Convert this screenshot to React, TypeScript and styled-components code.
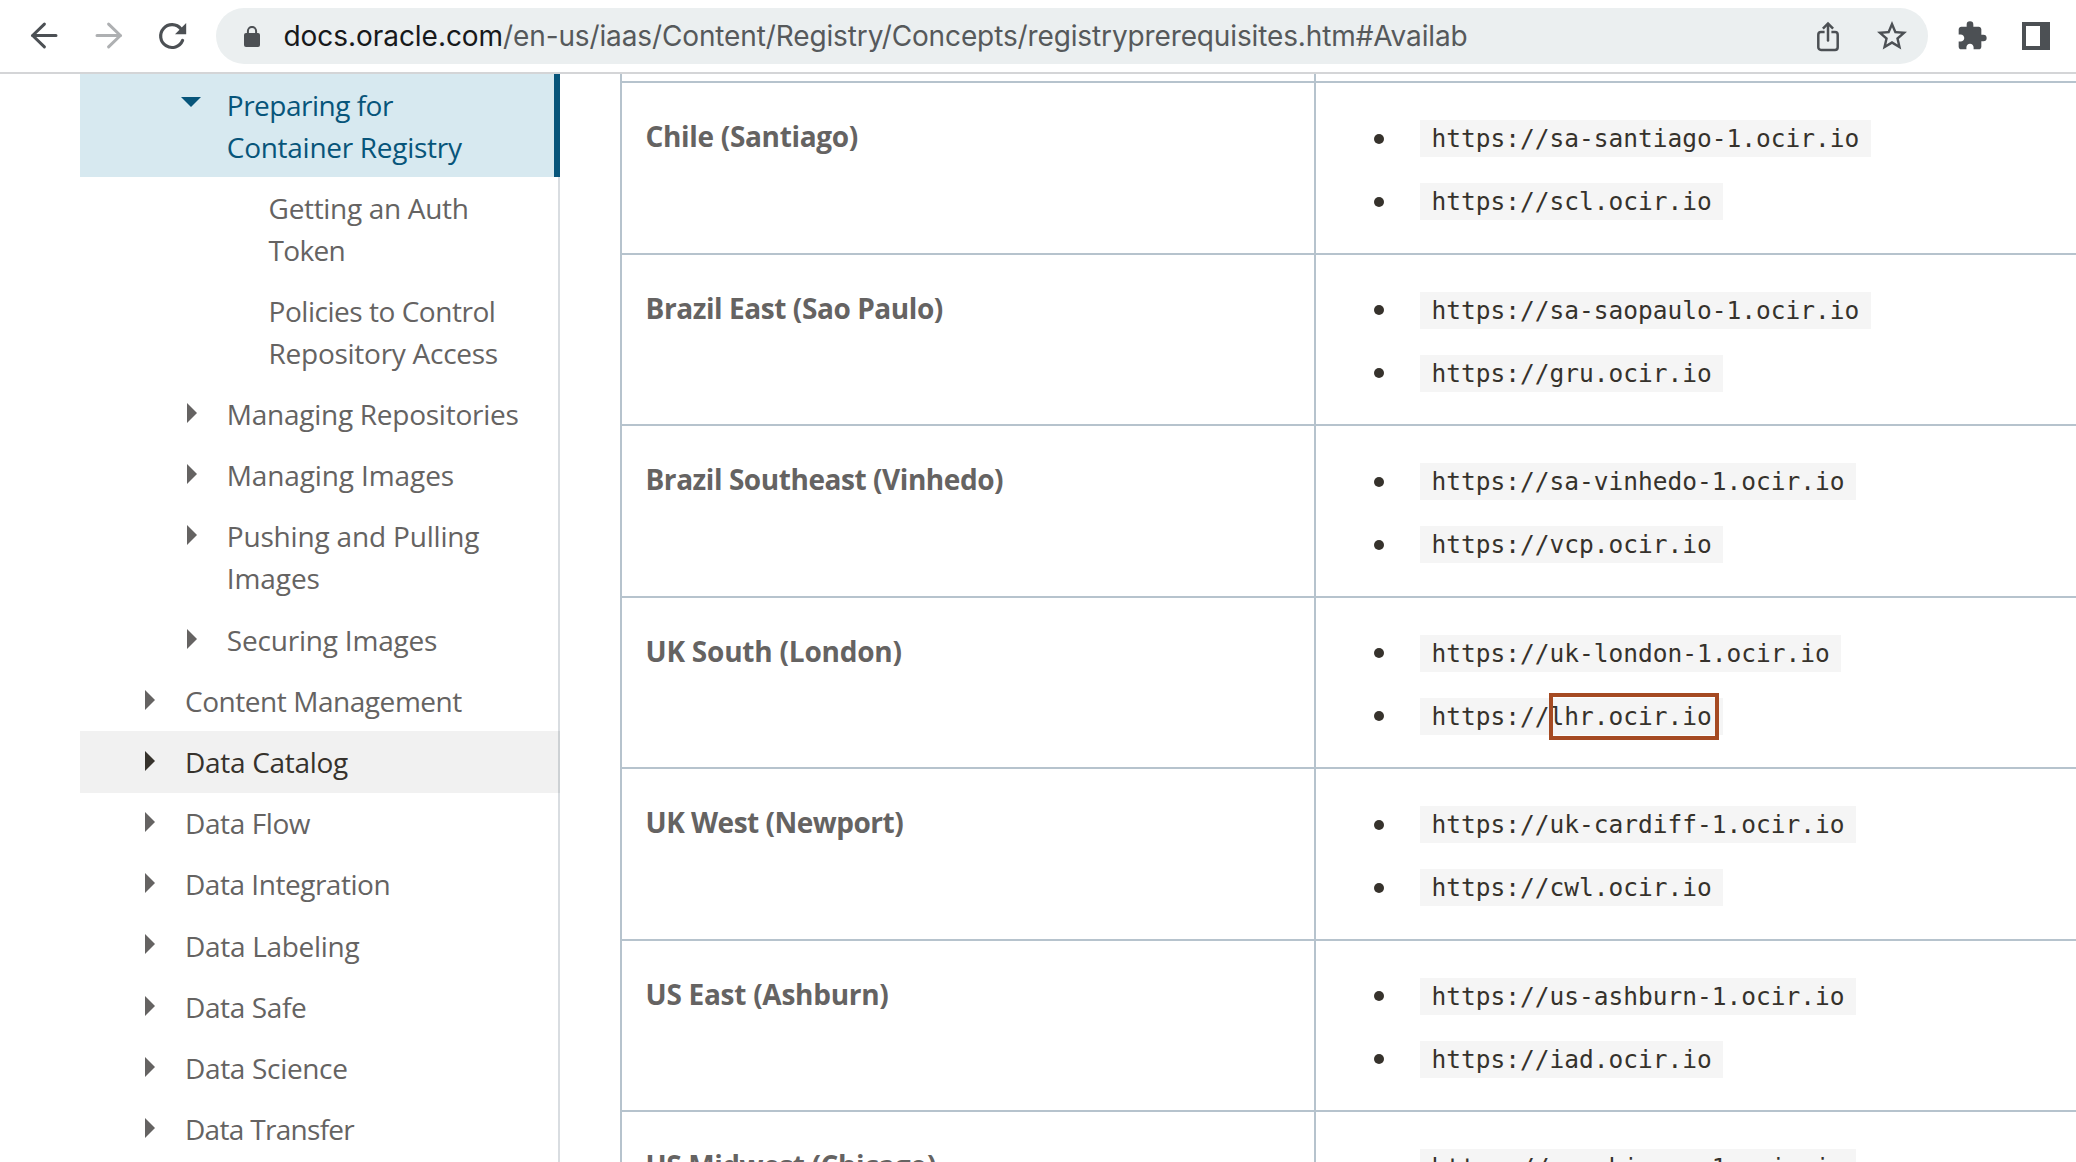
import React from "react";
import styled, { createGlobalStyle, css } from "styled-components";
import { MdStarBorder, MdExtension } from "react-icons/md";

const GlobalStyle = createGlobalStyle`
  * { box-sizing: border-box; }
  html, body { margin: 0; padding: 0; background: #fff; overflow: hidden; }
`;

const sans = `"Open Sans", "Noto Sans", sans-serif`;
const mono = `"DejaVu Sans Mono", "Liberation Mono", monospace`;
const rule = "#b6c3cd";

const Page = styled.div`
  display: flex;
  flex-direction: column;
  width: 2076px;
  height: 1162px;
  overflow: hidden;
  background: #fff;
  font-family: ${sans};
`;

const Toolbar = styled.header`
  flex: none;
  display: flex;
  align-items: flex-start;
  height: 74px;
  padding: 8px 26px 0 28px;
  border-bottom: 2px solid #d4d5d7;
  color: #4c5054;
`;

const NavButtons = styled.div`
  display: flex;
  gap: 32px;
  padding: 12px 28px 0 0;
  svg { display: block; }
`;

const AddressBar = styled.div`
  flex: 1;
  display: flex;
  align-items: flex-start;
  height: 56px;
  padding: 0 18px 0 28px;
  border-radius: 28px;
  background: #ebeff0;
`;

const Lock = styled.svg`
  display: block;
  margin: 18px 23.5px 0 0;
`;

const Address = styled.div`
  flex: 1;
  height: 56px;
  line-height: 56px;
  font-family: Inter, Roboto, sans-serif;
  font-size: 28px;
  letter-spacing: -0.125px;
  white-space: nowrap;
  color: #56595b;
`;

const Host = styled.span`
  color: #17191b;
  letter-spacing: -0.05px;
`;

const AddressActions = styled.div`
  display: flex;
  gap: 30px;
  padding-top: 10px;
  svg { display: block; }
`;

const Extras = styled.div`
  display: flex;
  gap: 34px;
  padding: 12px 0 0 28px;
  svg { display: block; }
`;

const PanelIcon = styled.span`
  width: 28px;
  height: 28px;
  margin-top: 2px;
  border: 4px solid #4c5054;
  border-right-width: 10px;
`;

const Body = styled.div`
  flex: 1;
  display: flex;
  min-height: 0;
  overflow: hidden;
`;

const Sidebar = styled.nav`
  flex: none;
  width: 480px;
  margin: -0.2px 0 0 80px;
  border-right: 2px solid #d9dde1;
`;

type Tone = "normal" | "current" | "hover";

const tones = {
  normal: css`color: #656362;`,
  current: css`
    color: #07557a;
    background: #d7e9f0;
    box-shadow: inset -6px 0 0 #07557a;
  `,
  hover: css`
    color: #36322c;
    background: rgba(22, 21, 19, 0.06);
  `,
};

const Item = styled.a<{ $level: number; $tone: Tone }>`
  display: flex;
  margin-right: -2px;
  padding: 9.7px 0 9.5px ${(p) => 59 + (p.$level - 1) * 41.8}px;
  font-size: 28px;
  line-height: 42px;
  white-space: nowrap;
  ${(p) => tones[p.$tone]}
`;

const ArrowSlot = styled.span<{ $open?: boolean }>`
  flex: none;
  width: 46px;
  padding: ${(p) => (p.$open ? "13.5px 0 0 0" : "9.9px 0 0 6px")};
  svg { display: block; }
`;

const Line = styled.span<{ $track: number }>`
  display: block;
  letter-spacing: ${(p) => p.$track}px;
`;

const Table = styled.div`
  flex: 1;
  margin-left: 60px;
  border-left: 2px solid ${rule};
`;

const HeaderTail = styled.div`
  display: grid;
  grid-template-columns: 694px 1fr;
  height: 7.4px;
`;

const Row = styled.div`
  display: grid;
  grid-template-columns: 694px 1fr;
  height: 171.5px;
  border-top: 2px solid ${rule};
`;

const NameCell = styled.div<{ $track?: number }>`
  padding: 31.7px 0 0 23.5px;
  border-right: 2px solid ${rule};
  color: #656362;
  font-size: 28px;
  font-weight: 700;
  line-height: 42px;
  letter-spacing: ${(p) => p.$track ?? 0}px;
`;

const HeaderEdge = styled.div`
  border-right: 2px solid ${rule};
`;

const UrlList = styled.ul`
  display: flex;
  flex-direction: column;
  gap: 26px;
  margin: 0;
  padding: 36.9px 0 0 58px;
  list-style: none;
`;

const UrlItem = styled.li`
  display: flex;
  align-items: center;
  gap: 36px;
  height: 37px;
  &::before {
    content: "";
    width: 10px;
    height: 10px;
    border-radius: 50%;
    background: #36322c;
  }
`;

const Code = styled.code`
  height: 37px;
  padding: 0 11.7px 0 11.5px;
  background: #f5f5f5;
  color: #36322c;
  font-family: ${mono};
  font-size: 24.5px;
  line-height: 37px;
  white-space: nowrap;
`;

const Marked = styled.span`
  position: relative;
  display: inline-block;
  &::after {
    content: "";
    position: absolute;
    inset: -5px -7.5px -5px -0.5px;
    border: 4px solid #a54a22;
  }
`;

interface Entry {
  level: number;
  tone?: Tone;
  arrow?: "open" | "closed";
  lines: [string, number][];
}

const entries: Entry[] = [
  { level: 2, tone: "current", arrow: "open", lines: [["Preparing for", -0.5], ["Container Registry", -0.28]] },
  { level: 3, lines: [["Getting an Auth", -0.32], ["Token", -0.7]] },
  { level: 3, lines: [["Policies to Control", -0.47], ["Repository Access", -0.27]] },
  { level: 2, arrow: "closed", lines: [["Managing Repositories", -0.26]] },
  { level: 2, arrow: "closed", lines: [["Managing Images", -0.12]] },
  { level: 2, arrow: "closed", lines: [["Pushing and Pulling", -0.18], ["Images", -0.1]] },
  { level: 2, arrow: "closed", lines: [["Securing Images", -0.2]] },
  { level: 1, arrow: "closed", lines: [["Content Management", -0.45]] },
  { level: 1, tone: "hover", arrow: "closed", lines: [["Data Catalog", -0.3]] },
  { level: 1, arrow: "closed", lines: [["Data Flow", -0.4]] },
  { level: 1, arrow: "closed", lines: [["Data Integration", -0.47]] },
  { level: 1, arrow: "closed", lines: [["Data Labeling", -0.3]] },
  { level: 1, arrow: "closed", lines: [["Data Safe", -0.38]] },
  { level: 1, arrow: "closed", lines: [["Data Science", -0.33]] },
  { level: 1, arrow: "closed", lines: [["Data Transfer", -0.7]] },
];

interface Region {
  name: string;
  track: number;
  hosts: [string, string];
  marked?: boolean;
}

const regions: Region[] = [
  { name: "Chile (Santiago)", track: -0.32, hosts: ["sa-santiago-1.ocir.io", "scl.ocir.io"] },
  { name: "Brazil East (Sao Paulo)", track: -0.42, hosts: ["sa-saopaulo-1.ocir.io", "gru.ocir.io"] },
  { name: "Brazil Southeast (Vinhedo)", track: -0.44, hosts: ["sa-vinhedo-1.ocir.io", "vcp.ocir.io"] },
  { name: "UK South (London)", track: -0.22, hosts: ["uk-london-1.ocir.io", "lhr.ocir.io"], marked: true },
  { name: "UK West (Newport)", track: -0.5, hosts: ["uk-cardiff-1.ocir.io", "cwl.ocir.io"] },
  { name: "US East (Ashburn)", track: -0.27, hosts: ["us-ashburn-1.ocir.io", "iad.ocir.io"] },
  { name: "US Midwest (Chicago)", track: -0.4, hosts: ["us-chicago-1.ocir.io", "ord.ocir.io"] },
];

const ArrowPath = "M28 15.5H4.4 M16.4 4.1L4.6 15.5L16.4 26.900";

function Browser() {
  return (
    <Toolbar>
      <NavButtons>
        <svg width="32" height="32" viewBox="0 0 32 32" fill="none" stroke="#4c5054" strokeWidth="3" strokeLinecap="round" strokeLinejoin="round">
          <path d={ArrowPath} />
        </svg>
        <svg width="32" height="32" viewBox="0 0 32 32" fill="none" stroke="#aeb0b2" strokeWidth="3" strokeLinecap="round" strokeLinejoin="round">
          <path d={ArrowPath} transform="matrix(-1 0 0 1 33 0)" />
        </svg>
        <svg width="32" height="32" viewBox="0 0 32 32" fill="none" stroke="#4c5054" strokeWidth="3.2">
          <path d="M26.600 20.400A11.400 11.400 0 1 1 25 9" strokeLinecap="round" />
          <path d="M30.200 3v11.300H19z" fill="#4c5054" stroke="none" />
        </svg>
      </NavButtons>
      <AddressBar>
        <Lock width="16" height="22" viewBox="0 0 16 22">
          <rect x="0" y="7" width="16" height="14" rx="2" fill="#4c5054" />
          <path d="M3.9 9V5a4.1 4.1 0 0 1 8.2 0v4" fill="none" stroke="#4c5054" strokeWidth="2" />
        </Lock>
        <Address>
          <Host>docs.oracle.com</Host>/en-us/iaas/Content/Registry/Concepts/registryprerequisites.htm#Availab
        </Address>
        <AddressActions>
          <svg width="32" height="36" viewBox="0 0 32 36" fill="none" stroke="#4c5054" strokeWidth="2.5">
            <path d="M12.6 14H9a2.7 2.7 0 0 0-2.7 2.7v12.6A2.7 2.7 0 0 0 9 32h14a2.7 2.7 0 0 0 2.7-2.7V16.7A2.7 2.7 0 0 0 23 14h-3.600" />
            <path d="M16 22.600V6.5" strokeLinecap="round" />
            <path d="M10.900 10.600L16 5.500l5.100 5.100" />
          </svg>
          <MdStarBorder size={36} />
        </AddressActions>
      </AddressBar>
      <Extras>
        <MdExtension size={32} />
        <PanelIcon />
      </Extras>
    </Toolbar>
  );
}

export default function App() {
  return (
    <Page>
      <GlobalStyle />
      <Browser />
      <Body>
        <Sidebar>
          {entries.map((e) => (
            <Item key={e.lines[0][0]} $level={e.level} $tone={e.tone ?? "normal"}>
              <ArrowSlot $open={e.arrow === "open"}>
                {e.arrow === "open" && (
                  <svg width="20" height="10" viewBox="0 0 20 10"><path d="M0 0h20L10 10z" fill="currentColor" /></svg>
                )}
                {e.arrow === "closed" && (
                  <svg width="10" height="20" viewBox="0 0 10 20"><path d="M0 0v20L10 10z" fill="currentColor" /></svg>
                )}
              </ArrowSlot>
              <span>
                {e.lines.map(([text, track]) => (
                  <Line key={text} $track={track}>{text}</Line>
                ))}
              </span>
            </Item>
          ))}
        </Sidebar>
        <Table>
          <HeaderTail>
            <HeaderEdge />
          </HeaderTail>
          {regions.map((r) => (
            <Row key={r.name}>
              <NameCell $track={r.track}>{r.name}</NameCell>
              <UrlList>
                {r.hosts.map((h, i) => (
                  <UrlItem key={h}>
                    <Code>https://{r.marked && i === 1 ? <Marked>{h}</Marked> : h}</Code>
                  </UrlItem>
                ))}
              </UrlList>
            </Row>
          ))}
        </Table>
      </Body>
    </Page>
  );
}
